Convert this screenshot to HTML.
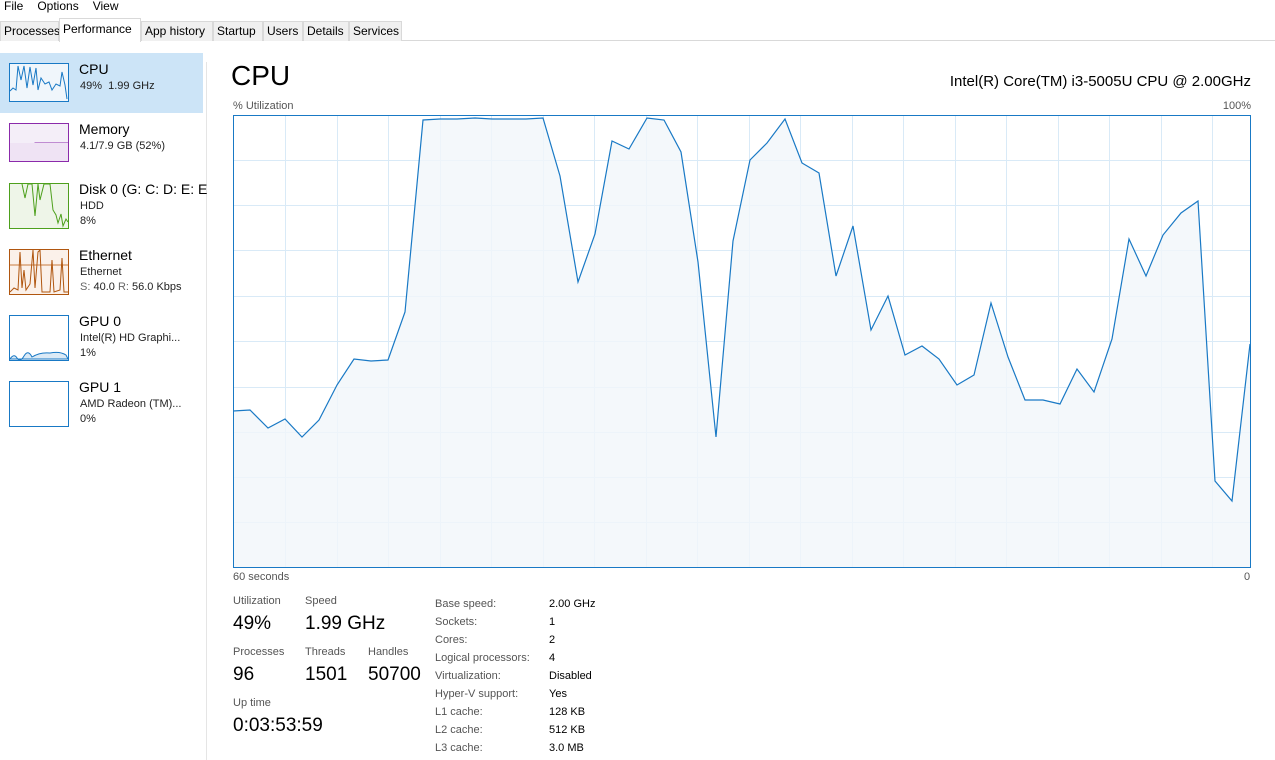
<!DOCTYPE html>
<html><head><meta charset="utf-8"><style>
*{margin:0;padding:0;box-sizing:border-box}
body{width:1275px;height:760px;background:#fff;font-family:"Liberation Sans",sans-serif;color:#000;position:relative;overflow:hidden;font-size:12px}
.a{position:absolute;white-space:nowrap}
.menu span{margin-right:14px}
.tabs{position:absolute;top:18px;left:0;width:1275px;height:23px;border-bottom:1px solid #d9d9d9;background:#fff}
.tab{position:absolute;top:3px;height:20px;border:1px solid #d9d9d9;border-bottom:none;background:#f0f0f0;font-size:12px;padding:2px 3px 0}
.tab.sel{top:0;height:24px;background:#fff;padding-top:3px}
.side{font-size:14px}
.sub{font-size:11px;color:#222}
.lbl{font-size:11px;color:#555}
.big{font-size:19px}
</style></head><body>
<div class="a menu" style="left:4px;top:-1px;font-size:12px"><span>File</span><span>Options</span><span>View</span></div>
<div class="tabs">
<div class="tab" style="left:0;width:59px">Processes</div>
<div class="tab sel" style="left:59px;width:82px">Performance</div>
<div class="tab" style="left:141px;width:72px">App history</div>
<div class="tab" style="left:213px;width:50px">Startup</div>
<div class="tab" style="left:263px;width:40px">Users</div>
<div class="tab" style="left:303px;width:46px">Details</div>
<div class="tab" style="left:349px;width:53px">Services</div>
</div>
<div class="a" style="left:0;top:53px;width:203px;height:60px;background:#cce4f7"></div>
<div class="a" style="left:206px;top:62px;width:1px;height:698px;background:#e5e5e5"></div>
<svg class="a" style="left:0;top:0" width="210" height="440">
<rect x="9.5" y="63.5" width="59" height="38" fill="#f0f6fb" stroke="#1979c5"/>
<polyline fill="none" stroke="#1979c5" points="10,91 13,88 16,90 18,66 21,80 24,66 27,88 30,67 33,85 36,68 38,90 41,78 45,84 49,82 52,90 56,84 60,86 62,72 65,85 67,99"/>
<rect x="9.5" y="123.5" width="59" height="38" fill="#f4eef8" stroke="#8b2aab"/>
<path d="M10,147 H35 V143 H68" fill="none" stroke="#8b2aab"/>
<rect x="10" y="143" width="58" height="18" fill="#efe3f4"/>
<rect x="9.5" y="183.5" width="59" height="45" fill="#eef5e8" stroke="#4da01c"/>
<polyline fill="none" stroke="#4da01c" points="22,184 25,198 28,184 32,184 35,216 38,184 40,200 44,184 50,184 53,210 56,215 58,223 61,214 63,226 66,219 68,222"/>
<rect x="9.5" y="249.5" width="59" height="45" fill="#fbf1ea" stroke="#b0560f"/>
<line x1="10" y1="265" x2="68" y2="265" stroke="#c97b3f"/>
<polyline fill="none" stroke="#b0560f" points="10,292 14,288 18,290 20,252 22,288 24,270 26,290 30,284 33,250 35,288 38,252 40,250 42,292 50,292 52,260 54,292 60,290 62,258 64,292 68,292"/>
<rect x="9.5" y="315.5" width="59" height="45" fill="#fff" stroke="#1979c5"/>
<path d="M10,359 Q14,353 17,358 T24,356 T32,357 Q40,352 50,353 Q60,351 66,355 L68,359 Z" fill="#dbeaf6" stroke="#1979c5"/>
<rect x="9.5" y="381.5" width="59" height="45" fill="#fff" stroke="#1979c5"/>
</svg>
<div class="a side" style="left:79px;top:61px">CPU</div>
<div class="a sub" style="left:80px;top:80px">49%&nbsp; 1.99 GHz</div>
<div class="a side" style="left:79px;top:121px">Memory</div>
<div class="a sub" style="left:80px;top:140px">4.1/7.9 GB (52%)</div>
<div class="a side" style="left:79px;top:181px">Disk 0 (G: C: D: E: E</div>
<div class="a sub" style="left:80px;top:200px">HDD</div>
<div class="a sub" style="left:80px;top:215px">8%</div>
<div class="a side" style="left:79px;top:247px">Ethernet</div>
<div class="a sub" style="left:80px;top:266px">Ethernet</div>
<div class="a sub" style="left:80px;top:281px"><span style="color:#666">S:</span> 40.0 <span style="color:#666">R:</span> 56.0 Kbps</div>
<div class="a side" style="left:79px;top:313px">GPU 0</div>
<div class="a sub" style="left:80px;top:332px">Intel(R) HD Graphi...</div>
<div class="a sub" style="left:80px;top:347px">1%</div>
<div class="a side" style="left:79px;top:379px">GPU 1</div>
<div class="a sub" style="left:80px;top:398px">AMD Radeon (TM)...</div>
<div class="a sub" style="left:80px;top:413px">0%</div>

<div class="a" style="left:231px;top:60px;font-size:28px">CPU</div>
<div class="a" style="right:24px;top:73px;font-size:15px">Intel(R) Core(TM) i3-5005U CPU @ 2.00GHz</div>
<div class="a lbl" style="left:233px;top:100px">% Utilization</div>
<div class="a lbl" style="right:24px;top:100px">100%</div>
<svg class="a" style="left:233px;top:115px" width="1018" height="453">
<rect x="0.5" y="0.5" width="1017" height="452" fill="#fff"/>
<g stroke="#d9eaf7" stroke-width="1">
<path d="M52.5,0V453M104.5,0V453M155.5,0V453M207.5,0V453M258.5,0V453M310.5,0V453M361.5,0V453M413.5,0V453M464.5,0V453M516.5,0V453M567.5,0V453M619.5,0V453M670.5,0V453M722.5,0V453M773.5,0V453M825.5,0V453M876.5,0V453M928.5,0V453M979.5,0V453"/>
<path d="M0,45.5H1018M0,90.5H1018M0,135.5H1018M0,181.5H1018M0,226.5H1018M0,272.5H1018M0,317.5H1018M0,362.5H1018M0,407.5H1018"/>
</g>
<g transform="translate(-233,-115)">
<polygon fill="#f1f6fa" fill-opacity="0.8" stroke="none" points="233,567 233,411 250,410 268,428 285,419 302,437 319,420 337,385 354,359 371,361 388,360 405,312 423,120 440,119 457,119 475,118 492,119 509,119 526,119 543,118 560,176 578,282 595,234 612,141 629,149 647,118 664,120 681,152 698,262 716,437 733,241 750,160 767,143 785,119 802,163 819,173 836,276 853,226 871,330 888,296 905,355 922,346 939,359 957,385 974,375 991,303 1008,357 1025,400 1043,400 1060,404 1077,369 1094,392 1112,339 1129,239 1146,276 1163,235 1181,213 1198,201 1215,481 1232,501 1250,344 1250,567"/>
<polyline fill="none" stroke="#1979c5" stroke-width="1.2" points="233,411 250,410 268,428 285,419 302,437 319,420 337,385 354,359 371,361 388,360 405,312 423,120 440,119 457,119 475,118 492,119 509,119 526,119 543,118 560,176 578,282 595,234 612,141 629,149 647,118 664,120 681,152 698,262 716,437 733,241 750,160 767,143 785,119 802,163 819,173 836,276 853,226 871,330 888,296 905,355 922,346 939,359 957,385 974,375 991,303 1008,357 1025,400 1043,400 1060,404 1077,369 1094,392 1112,339 1129,239 1146,276 1163,235 1181,213 1198,201 1215,481 1232,501 1250,344"/>
</g>
<rect x="0.5" y="0.5" width="1017" height="452" fill="none" stroke="#1979c5"/>
</svg>
<div class="a lbl" style="left:233px;top:571px">60 seconds</div>
<div class="a lbl" style="left:1244px;top:571px">0</div>

<div class="a lbl" style="left:233px;top:595px">Utilization</div>
<div class="a lbl" style="left:305px;top:595px">Speed</div>
<div class="a big" style="left:233px;top:613px">49%</div>
<div class="a big" style="left:305px;top:613px">1.99 GHz</div>
<div class="a lbl" style="left:233px;top:646px">Processes</div>
<div class="a lbl" style="left:305px;top:646px">Threads</div>
<div class="a lbl" style="left:368px;top:646px">Handles</div>
<div class="a big" style="left:233px;top:664px">96</div>
<div class="a big" style="left:305px;top:664px">1501</div>
<div class="a big" style="left:368px;top:664px">50700</div>
<div class="a lbl" style="left:233px;top:697px">Up time</div>
<div class="a big" style="left:233px;top:715px">0:03:53:59</div>
<div class="a" style="left:435px;top:595px;line-height:18px;font-size:11px;color:#555">Base speed:<br>Sockets:<br>Cores:<br>Logical processors:<br>Virtualization:<br>Hyper-V support:<br>L1 cache:<br>L2 cache:<br>L3 cache:</div>
<div class="a" style="left:549px;top:595px;line-height:18px;font-size:11px;color:#000">2.00 GHz<br>1<br>2<br>4<br>Disabled<br>Yes<br>128 KB<br>512 KB<br>3.0 MB</div>
</body></html>
